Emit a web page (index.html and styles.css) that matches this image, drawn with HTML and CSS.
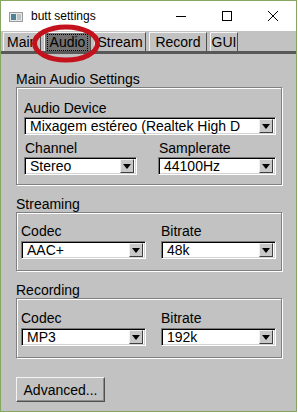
FILE: index.html
```html
<!DOCTYPE html>
<html lang="en">

<head>
    <meta charset="UTF-8">
    <meta name="viewport" content="width=device-width, initial-scale=1.0">
    <title>butt settings</title>
    <link rel="stylesheet" href="styles.css">
</head>

<body>
    <div class="window">
        <div class="titlebar">
            <svg class="app-icon" width="14" height="10" viewBox="0 0 14 10">
                <rect x="0.5" y="0.5" width="13" height="9" fill="#e8e8e8" stroke="#9a9a9a" />
                <rect x="2" y="2" width="5" height="6" fill="#4f8296" />
                <rect x="8" y="2" width="4" height="6" fill="#b9c3c8" />
            </svg>
            <span class="title">butt settings</span>
            <div class="controls">
                <div class="control">
                    <svg width="10" height="10" viewBox="0 0 10 10"><path d="M0 5.5H10" stroke="#000" /></svg>
                </div>
                <div class="control">
                    <svg width="10" height="10" viewBox="0 0 10 10"><rect x="0.5" y="0.5" width="9" height="9" fill="none" stroke="#000" /></svg>
                </div>
                <div class="control">
                    <svg width="10" height="10" viewBox="0 0 10 10"><path d="M0 0L10 10M10 0L0 10" stroke="#000" /></svg>
                </div>
            </div>
        </div>

        <div class="tabs">
            <div class="tab tab-main">Main</div>
            <div class="tab tab-audio active"><span class="focus">Audio</span></div>
            <div class="tab tab-stream">Stream</div>
            <div class="tab tab-record">Record</div>
            <div class="tab tab-gui">GUI</div>
        </div>

        <div class="panel">
            <div class="group-label">Main Audio Settings</div>
            <div class="group group-main">
                <div class="label">Audio Device</div>
                <div class="choice">
                    <span class="value">Mixagem estéreo (Realtek High D</span>
                    <span class="arrow"></span>
                </div>
                <div class="row row-main">
                    <div>
                        <div class="label">Channel</div>
                        <div class="choice">
                            <span class="value">Stereo</span>
                            <span class="arrow"></span>
                        </div>
                    </div>
                    <div>
                        <div class="label">Samplerate</div>
                        <div class="choice">
                            <span class="value">44100Hz</span>
                            <span class="arrow"></span>
                        </div>
                    </div>
                </div>
            </div>

            <div class="group-label spaced">Streaming</div>
            <div class="group group-small">
                <div class="row">
                    <div>
                        <div class="label">Codec</div>
                        <div class="choice">
                            <span class="value">AAC+</span>
                            <span class="arrow"></span>
                        </div>
                    </div>
                    <div>
                        <div class="label">Bitrate</div>
                        <div class="choice">
                            <span class="value">48k</span>
                            <span class="arrow"></span>
                        </div>
                    </div>
                </div>
            </div>

            <div class="group-label spaced">Recording</div>
            <div class="group group-small group-rec">
                <div class="row">
                    <div>
                        <div class="label">Codec</div>
                        <div class="choice">
                            <span class="value">MP3</span>
                            <span class="arrow"></span>
                        </div>
                    </div>
                    <div>
                        <div class="label">Bitrate</div>
                        <div class="choice">
                            <span class="value">192k</span>
                            <span class="arrow"></span>
                        </div>
                    </div>
                </div>
            </div>

            <button class="button">Advanced...</button>
        </div>

        <svg class="highlight" width="120" height="70" viewBox="0 0 120 70">
            <ellipse cx="66" cy="43.5" rx="31.5" ry="16.5" fill="none" stroke="#c3121c" stroke-width="5" />
        </svg>
    </div>
</body>

</html>
```

FILE: styles.css
```css
body {
    margin: 0;
    background-color: #fff;
    font-family: 'Liberation Sans', Arial, sans-serif;
    font-size: 14px;
    color: #000;
}

.window {
    position: relative;
    box-sizing: border-box;
    width: 297px;
    height: 412px;
    border: 1px solid #86a763;
    background-color: #c2c2c2;
}

/* title bar */

.titlebar {
    display: flex;
    align-items: center;
    height: 30px;
    padding-left: 8px;
    background-color: #fff;
}

.app-icon {
    display: block;
    margin-top: 1px;
}

.title {
    margin-left: 8px;
    font-size: 12px;
    color: #000;
}

.controls {
    display: flex;
    margin-left: auto;
    height: 30px;
}

.control {
    display: flex;
    justify-content: center;
    align-items: center;
    width: 46px;
}

.control svg {
    display: block;
}

/* tabs */

.tabs {
    display: flex;
    align-items: flex-end;
    height: 20px;
    padding-left: 2px;
}

.tab {
    box-sizing: border-box;
    height: 19px;
    line-height: 18px;
    border-top: 1px solid #f4f4f4;
    border-left: 1px solid #f4f4f4;
    border-right: 1px solid #505050;
    margin-right: 3px;
    text-align: center;
}

.tab-main { width: 38px; text-align: left; padding-left: 3px; }
.tab-audio { width: 47px; }
.tab-stream { width: 52px; }
.tab-record { width: 58px; }
.tab-gui { width: 28px; }

.tab.active {
    background-color: #717171;
    padding: 1px 2px 0;
}

.focus {
    display: block;
    height: 15px;
    line-height: 15px;
    border: 1px dotted #000;
}

/* panel */

.panel {
    border-top: 3px solid #585858;
    padding: 17px 14px 0 15px;
}

.group-label {
    line-height: 16px;
}

.group-label.spaced {
    margin-top: 11px;
}

.group {
    border: 1px solid #808080;
    box-shadow: inset 1px 1px 0 #fff, 1px 1px 0 #fff;
}

.group-main {
    padding: 13px 5px 9px 7px;
}

.group-small {
    padding: 11px 6px 11px 4px;
}

.group-rec {
    padding-top: 12px;
}

.label {
    line-height: 15px;
    margin-bottom: 1px;
}

.group-small .label {
    margin-bottom: 2px;
}

.row {
    display: grid;
    grid-template-columns: 125px 115px;
    column-gap: 15px;
}

.row-main {
    grid-template-columns: 113px 118px;
    column-gap: 21px;
    margin-top: 6px;
}

.row-main .label {
    padding-left: 1px;
}

/* dropdown */

.choice {
    display: flex;
    align-items: center;
    box-sizing: border-box;
    height: 18px;
    background-color: #fff;
    border: 1px solid;
    border-color: #7a7a7a #fff #fff #7a7a7a;
    box-shadow: inset 1px 1px 0 #000, inset -1px -1px 0 #d4d4d4;
    padding: 1px 2px 1px 1px;
}

.value {
    flex: 1;
    padding-left: 4px;
    line-height: 16px;
    white-space: nowrap;
    overflow: hidden;
}

.arrow {
    position: relative;
    box-sizing: border-box;
    width: 14px;
    height: 14px;
    background-color: #c8c8c8;
    border: 1px solid;
    border-color: #f0f0f0 #404040 #404040 #f0f0f0;
}

.arrow::after {
    content: '';
    position: absolute;
    left: 2px;
    top: 4px;
    border-left: 4px solid transparent;
    border-right: 4px solid transparent;
    border-top: 5px solid #000;
}

/* button */

.button {
    display: block;
    box-sizing: border-box;
    width: 89px;
    height: 25px;
    margin-top: 19px;
    padding: 0;
    font-family: 'Liberation Sans', Arial, sans-serif;
    font-size: 14px;
    color: #000;
    background-color: #c2c2c2;
    border: 1px solid;
    border-color: #f4f4f4 #505050 #505050 #f4f4f4;
    box-shadow: inset -1px -1px 0 #8c8c8c;
}

.highlight {
    position: absolute;
    left: -1px;
    top: -1px;
}
```
